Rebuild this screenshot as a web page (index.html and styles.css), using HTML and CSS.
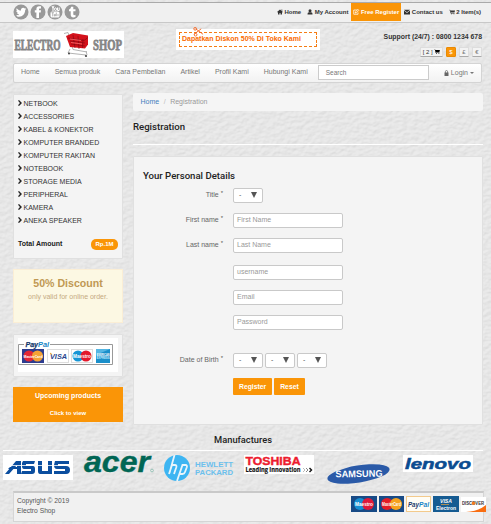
FILE: index.html
```html
<!DOCTYPE html>
<html lang="id">
<head>
<meta charset="utf-8">
<title>Electro Shop</title>
<link rel="stylesheet" href="styles.css">
</head>
<body>
<svg class="paper" width="491" height="524" aria-hidden="true">
  <filter id="grain" x="0" y="0" width="100%" height="100%" color-interpolation-filters="sRGB">
    <feTurbulence type="fractalNoise" baseFrequency="0.18 0.28" numOctaves="3" seed="5" result="n"/>
    <feDiffuseLighting in="n" lighting-color="#fff" surfaceScale="0.8" diffuseConstant="1.07"><feDistantLight azimuth="235" elevation="58"/></feDiffuseLighting>
  </filter>
  <rect width="491" height="524" filter="url(#grain)" opacity=".2"/>
</svg>
<svg class="defs" width="0" height="0" aria-hidden="true">
  <symbol id="cart" viewBox="0 0 14 12"><path d="M0 1h2.600l.4 1.300H14l-1.200 5H4.600l.2 1H13v1H3.900L2 2H0zM5 10h2v2H5zM10.500 10h2v2h-2z"/></symbol>
</svg>
<header class="topbar">
  <div class="social">
    <svg viewBox="0 0 16 16"><circle cx="8" cy="8" r="7.500" fill="#999"/><path d="M3 11.500c2 0 2.800-.4 3.300-.9-1.300 0-2-.8-2.200-1.500h.9C3.800 8.600 3.300 7.700 3.300 6.800l.9.200C3.200 6.100 3.200 5 3.700 4.200 5 5.700 6.400 6.500 8 6.600 7.700 4.500 9.100 3.600 10.200 3.700c.7 0 1.200.4 1.500.8l1.300-.5-.8 1.200 1-.2-1 1.100C12.200 9.800 9.700 12.800 6 12.800c-1.200 0-2.200-.4-3-1.300z" fill="#fff"/></svg>
    <svg viewBox="0 0 16 16"><circle cx="8" cy="8" r="7.500" fill="#999"/><path d="M6.400 14V8.600H4.800V6.300h1.600V4.900C6.400 3.100 7.500 2.200 9 2.200h2v2.300H9.900c-.7 0-.9.300-.9.900v.9h2l-.3 2.300H9V14z" fill="#fff"/></svg>
    <svg viewBox="0 0 16 16"><circle cx="8" cy="8" r="7.500" fill="#999"/><path d="M5 1.800l1 2.700V7M7 1.800L6 4.500M10.500 3.500v3h1.700v-3" fill="none" stroke="#fff"/><ellipse cx="8.500" cy="5.200" rx="1" ry="1.400" fill="none" stroke="#fff"/><rect x="3.500" y="7.500" width="9" height="6" rx="1.500" fill="#fff"/><path d="M4.500 8.700h2.400M5.700 8.700v3.700M7.300 10v2h1v-2M9.300 8.500v3.700M11 10v2.200" stroke="#999" stroke-width=".7" fill="none"/></svg>
    <svg viewBox="0 0 16 16"><circle cx="8" cy="8" r="7.500" fill="#999"/><path d="M7 2.700h2.300v2.500h2.200v2H9.300v2.900c0 1.300.8 1.400 2.200.7v2.200c-2.500 1-4.800.3-4.800-2.300V7.200H5V5.400c1.400-.4 1.900-1.200 2-2.700z" fill="#fff"/></svg>
  </div>
  <nav class="account">
    <a><svg viewBox="0 0 12 12"><path d="M0 6l6-5 6 5-1 1-1-.8V11H7V8H5v3H2V6.200L1 7zM9 1h1.500v3L9 2.700z"/></svg>Home</a>
    <a><svg viewBox="0 0 12 12"><circle cx="6" cy="3.500" r="3"/><path d="M1 11c0-3 1-4.500 3-4.500h4c2 0 3 1.500 3 4.500z"/></svg>My Account</a>
    <a class="active"><svg viewBox="0 0 12 12"><path d="M8 2H1.500v8.500H10V7M4.500 8l.5-2.500L10 .7 11.700 2.500 7 7.500z" fill="none" stroke="#fff" stroke-width="1.500"/></svg><span>Free Register</span></a>
    <a><svg viewBox="0 0 12 12"><path d="M0 1.500h12L6 6.500zM0 3l6 5 6-5v8H0z"/></svg>Contact us</a>
    <a><svg viewBox="0 0 14 12"><use href="#cart"/></svg>2 Item(s)</a>
  </nav>
</header>

<div class="container">
  <div class="brand-row">
    <svg class="logo" viewBox="0 0 111 27"><rect width="111" height="27" fill="#fff"/>
      <g font-family="Liberation Serif" font-weight="bold" font-size="15.500" fill="#858585" stroke="#858585" stroke-width=".8"><text x="1.500" y="18.500" textLength="46" lengthAdjust="spacingAndGlyphs">ELECTRO</text><text x="80" y="18.500" textLength="29" lengthAdjust="spacingAndGlyphs">SHOP</text></g>
      <path d="M51 2.500l4-1 5 17 14 2.500M57 18l-2 4 18 2M73 20l1 4" stroke="#aaa" fill="none" stroke-width=".9"/><path d="M53 5l7-3 15 2.500v9l-3 4-15-1.500z" fill="#d4111b"/><path d="M55 7l16 2.500 4-3M57 10l15 2M58 13l14 2M60 4l2 13M65 5l1 13M70 8l-.5 9" stroke="#7f0710" stroke-width=".6" fill="none"/><path d="M57 8l11 1.500M58 11.500l11 1.500" stroke="#ff7a7a" stroke-width=".7"/><circle cx="56" cy="22.500" r="1" fill="#444"/><circle cx="73" cy="25" r="1.100" fill="#444"/>
    </svg>
    <div class="coupon"><svg class="scissors" viewBox="0 0 12 11"><path d="M1 8l8-6M3 2l8 6" stroke="#f26522" stroke-width="1"/><circle cx="2.300" cy="2" r="1.500" fill="none" stroke="#f26522"/><circle cx="2.800" cy="8.500" r="1.500" fill="none" stroke="#f26522"/></svg><p>Dapatkan Diskon 50% Di Toko Kami</p></div>
    <div class="support"><p>Support (24/7) : 0800 1234 678</p>
      <div class="currency"><span class="basket">[ 2 ] <svg viewBox="0 0 14 12"><use href="#cart"/></svg></span><span class="on">$</span><span>£</span><span>€</span></div>
    </div>
  </div>

  <nav class="navbar">
    <a>Home</a><a>Semua produk</a><a>Cara Pembelian</a><a>Artikel</a><a>Profil Kami</a><a>Hubungi Kami</a>
    <div class="search">Search</div>
    <div class="login"><svg viewBox="0 0 10 12"><path d="M1 5h8v7H1z"/><path d="M2.800 6V3.300a2.200 2.200 0 0 1 4.400 0V6" fill="none" stroke="#666" stroke-width="1.500"/></svg>Login <i></i></div>
  </nav>

  <div class="columns">
    <aside>
      <div class="box categories">
        <ul>
          <li>NETBOOK</li><li>ACCESSORIES</li><li>KABEL &amp; KONEKTOR</li><li>KOMPUTER BRANDED</li><li>KOMPUTER RAKITAN</li><li>NOTEBOOK</li><li>STORAGE MEDIA</li><li>PERIPHERAL</li><li>KAMERA</li><li>ANEKA SPEAKER</li>
        </ul>
        <div class="total"><b>Total Amount</b><span>Rp.1M</span></div>
      </div>
      <div class="discount"><h2>50% Discount</h2><p>only valid for online order.</p></div>
      <div class="box paypal">
        <svg viewBox="0 0 100 34"><rect width="100" height="34" fill="#fff"/><path d="M6 6.500H.5v20h94v-20H32" fill="none" stroke="#999"/>
          <g font-family="Liberation Sans" font-weight="bold" font-style="italic"><text x="7.500" y="8.500" font-size="7" textLength="12.500" lengthAdjust="spacingAndGlyphs" fill="#173a6b" stroke="#173a6b" stroke-width=".25">Pay</text><text x="20" y="8.500" font-size="7" textLength="11" lengthAdjust="spacingAndGlyphs" fill="#1584c4">Pal</text></g>
          <rect x="4" y="11" width="22" height="14" fill="#2c3c8f"/><circle cx="11" cy="18" r="5.500" fill="#e32636"/><circle cx="19.500" cy="18" r="5.500" fill="#f5a335"/><text x="5.500" y="19.500" font-family="Liberation Sans" font-weight="bold" font-size="4" textLength="19" lengthAdjust="spacingAndGlyphs" fill="#fff">MasterCard</text>
          <rect x="29.500" y="11.500" width="21" height="13" fill="#fff" stroke="#ddd"/><text x="32" y="21" font-family="Liberation Sans" font-weight="bold" font-style="italic" font-size="8" textLength="17" lengthAdjust="spacingAndGlyphs" fill="#28458e">VISA</text><path d="M32 15l2 1.500" stroke="#e69d20"/>
          <rect x="53.500" y="11.500" width="21" height="13" fill="#fff" stroke="#ddd"/><circle cx="60" cy="18" r="5.500" fill="#1595d5"/><circle cx="68" cy="18" r="5.500" fill="#e3192c"/><text x="55" y="19.500" font-family="Liberation Sans" font-weight="bold" font-size="4.500" textLength="18" lengthAdjust="spacingAndGlyphs" fill="#fff">Maestro</text>
          <rect x="78" y="11" width="14" height="14" fill="#1a8fca"/><path d="M78 11h14l-14 6z" fill="#54b6e3"/><text x="78.500" y="17.500" font-family="Liberation Sans" font-weight="bold" font-size="3.500" textLength="13" lengthAdjust="spacingAndGlyphs" fill="#fff">AMERICAN</text><text x="78.500" y="21" font-family="Liberation Sans" font-weight="bold" font-size="3.500" textLength="13" lengthAdjust="spacingAndGlyphs" fill="#cfeeff">EXPRESS</text></svg>
      </div>
      <div class="upcoming"><b>Upcoming products</b><small>Click to view</small></div>
    </aside>
    <main>
      <div class="breadcrumb"><a>Home</a><i>/</i><span>Registration</span></div>
      <h1>Registration</h1>
      <form class="box">
        <h3>Your Personal Details</h3>
        <div class="row"><label>Title <sup>*</sup></label><span class="select">-</span></div>
        <div class="row"><label>First name <sup>*</sup></label><span class="input">First Name</span></div>
        <div class="row last"><label>Last name <sup>*</sup></label><span class="input">Last Name</span></div>
        <div class="row"><label></label><span class="input">username</span></div>
        <div class="row"><label></label><span class="input">Email</span></div>
        <div class="row password"><label></label><span class="input">Password</span></div>
        <div class="row"><label>Date of Birth <sup>*</sup></label><span class="select">-</span><span class="select">-</span><span class="select">-</span></div>
        <div class="actions"><span class="btn">Register</span><span class="btn">Reset</span></div>
      </form>
    </main>
  </div>
</div>

<section class="makers">
  <h4>Manufactures</h4>
  <div class="logos">
    <svg width="70" height="25" viewBox="0 0 70 25"><rect width="70" height="25" fill="#fff"/><g fill="#0b4e9f"><path d="M2 19L13 6h5v13h-4V10L6 19zM7 12h7v2H5zM20 6h12l-1 3h-8v2h7q2 0 2 3v2q0 3-3 3H18l1-3h9v-2h-7q-2 0-2-3V8zM35 6h4v10h6V6h4v13H37q-2 0-2-3zM52 6h14v3H55v2h8q4 0 4 4t-4 4H51v-3h11v-2h-8q-3 0-3-4z"/></g><path d="M1 10.500h68" stroke="#fff" stroke-width=".8"/></svg>
    <svg width="71" height="19" viewBox="0 0 71 19"><text x="1" y="16.500" font-family="Liberation Sans" font-weight="bold" font-style="italic" font-size="30" textLength="66" lengthAdjust="spacingAndGlyphs" fill="#006654" stroke="#006654" stroke-width=".4">acer</text><circle cx="69" cy="15.500" r="1.400" fill="none" stroke="#7bb3a5" stroke-width=".7"/></svg>
    <svg width="71" height="27" viewBox="0 0 71 27"><circle cx="14" cy="13" r="13" fill="#3db5f2"/><path d="M11.500 0L6.500 18M6 19l3-9h3q2 0 1.300 2.300L11 19M14 26l5.500-16h3q2 0 1.300 2.300L22 17q-.7 2-2.500 2H16" fill="none" stroke="#e9f5fb" stroke-width="1.800"/><g font-family="Liberation Sans" font-size="7" font-weight="bold" fill="#6bc0ed"><text x="32" y="11.500" textLength="38" lengthAdjust="spacingAndGlyphs">HEWLETT</text><text x="32" y="19.500" textLength="38" lengthAdjust="spacingAndGlyphs">PACKARD</text></g></svg>
    <svg width="70" height="19" viewBox="0 0 70 19"><rect width="70" height="19" fill="#fff"/><text x="1.500" y="9.500" font-family="Liberation Sans" font-weight="bold" font-size="11.500" textLength="55" lengthAdjust="spacingAndGlyphs" fill="#ed1c2e" stroke="#ed1c2e" stroke-width=".4">TOSHIBA</text><text x="1.500" y="17" font-family="Open Sans" font-weight="bold" font-size="6.300" textLength="55" lengthAdjust="spacingAndGlyphs" fill="#111" stroke="#111" stroke-width=".15">Leading Innovation</text><path d="M59 13l2 2-2 2" fill="none" stroke="#bbb"/><path d="M62 13l2 2-2 2" fill="none" stroke="#888"/><path d="M65.500 13l2 2-2 2" fill="none" stroke="#111" stroke-width="1.400"/></svg>
    <svg class="samsung" width="63" height="22" viewBox="0 0 63 22"><ellipse cx="31.500" cy="11" rx="31.500" ry="8.500" transform="rotate(-9 31.500 11)" fill="#2a5aa8"/><text x="8.500" y="14" font-family="Liberation Sans" font-weight="bold" font-size="9.500" textLength="47" lengthAdjust="spacingAndGlyphs" fill="#fff" transform="rotate(-1 30 12)">SAMSUNG</text></svg>
    <svg width="70" height="17" viewBox="0 0 70 17"><rect width="70" height="17" fill="#fff"/><text x="2" y="13.500" font-family="Liberation Sans" font-weight="bold" font-style="italic" font-size="14.500" textLength="66" lengthAdjust="spacingAndGlyphs" fill="#0b4c91" stroke="#0b4c91" stroke-width=".5">lenovo</text></svg>
  </div>
</section>

<footer>
  <p>Copyright © 2019<br>Electro Shop</p>
  <svg width="136" height="17" viewBox="0 0 136 17" font-family="Liberation Sans" font-weight="bold">
    <rect width="26" height="16" fill="#174a86"/><circle cx="9" cy="8" r="6" fill="#168fd3"/><circle cx="17" cy="8" r="6" fill="#df1939"/><text x="4" y="9.800" font-size="4.500" textLength="18" lengthAdjust="spacingAndGlyphs" fill="#fff">Maestro</text>
    <rect x="28" width="25" height="16" fill="#174a86"/><circle cx="36" cy="8" r="6" fill="#e31c26"/><circle cx="45" cy="8" r="6" fill="#f6a21d"/><text x="31" y="9.800" font-size="4.500" textLength="19" lengthAdjust="spacingAndGlyphs" fill="#fff">MasterCard</text>
    <rect x="55.500" y=".5" width="24" height="15" fill="#fffdf5" stroke="#f3ca8c"/><text x="57" y="10.500" font-style="italic" font-size="7" textLength="11" lengthAdjust="spacingAndGlyphs" fill="#173a6b">Pay</text><text x="68" y="10.500" font-style="italic" font-size="7" textLength="10" lengthAdjust="spacingAndGlyphs" fill="#1785c8">Pal</text>
    <rect x="82" width="26" height="16" fill="#155b92"/><text x="89" y="6.500" font-size="5.500" font-style="italic" textLength="12" lengthAdjust="spacingAndGlyphs" fill="#fff">VISA</text><path d="M90 8.500h8" stroke="#e8a33d" stroke-width=".7"/><text x="85" y="13.500" font-size="5" textLength="20" lengthAdjust="spacingAndGlyphs" fill="#fff">Electron</text>
    <rect x="110" y="1" width="25" height="15" fill="#fff"/><text x="111" y="9" font-size="4.500" textLength="22" lengthAdjust="spacingAndGlyphs" fill="#333">DISCOVER</text><circle cx="122.500" cy="7.300" r="1.700" fill="#f47b20"/><path d="M135 9v7h-20q13-1 20-7z" fill="#f96d10"/>
  </svg>
</footer>
</body>
</html>
```
FILE: styles.css
```css
* { box-sizing: border-box; }
body { margin: 0; width: 491px; height: 524px; overflow: hidden; background: #e7e7e7; color: #333; font: 7px/10px "Liberation Sans", Arial, sans-serif; }
h1, h2, h3, h4, p, ul { margin: 0; padding: 0; }
svg { overflow: visible; }
.paper { position: absolute; inset: 0; z-index: -1; }
.defs { position: absolute; }
.topbar { display: flex; justify-content: space-between; height: 21px; margin: 2px 0 1px; padding: 0 10px 0 12.5px; background: #f0f0f0; border-top: 1px solid #aaa; border-bottom: 1px solid #c8c8c8; }
.social { display: flex; gap: 1px; padding-top: 1px; }
.social svg { width: 16px; height: 16px; }
.account { display: flex; height: 18px; font: bold 6px/18px "Liberation Sans", sans-serif; color: #333; }
.account a { padding: 0 3px; display: flex; align-items: center; gap: 1.500px; white-space: nowrap; }
.account a:last-child { padding-right: 0; }
.account svg { width: 6px; height: 6px; fill: #333; }
.account .active { background: #fa9507; color: #fff; padding: 0 2px; }
.container { padding: 0 8px 0 13px; }
.brand-row { display: flex; height: 38px; }
.logo { width: 111px; height: 27px; margin-top: 7px; }
.coupon { position: relative; width: 144px; height: 21px; margin: 5px 0 0 52px; padding: 3px; background: #fff; }
.coupon p { height: 15px; width: 138px; border: 1px dashed #f57c14; color: #fa6a00; font: bold 7px/11px "Liberation Sans", sans-serif; padding-left: 2px; white-space: nowrap; }
.scissors { position: absolute; left: 17px; top: -2px; width: 11px; height: 10px; }
.support { margin-left: auto; padding: 7px 1px 0 0; text-align: right; font: bold 6.900px/11px "Liberation Sans", sans-serif; color: #333; white-space: nowrap; }
.currency { display: flex; justify-content: flex-end; gap: 3px; margin-top: 5px; font: 6px/10px "Liberation Sans", sans-serif; }
.currency span { height: 10px; width: 10px; text-align: center; background: #f3f3f3; border: 1px solid #ddd; border-bottom-color: #aaa; border-radius: 1px; line-height: 8px; color: #777; }
.currency .basket { width: 23px; color: #333; }
.currency svg { width: 6px; height: 5px; }
.currency .on { background: #fa9507; border-color: #e98a05; color: #fff; }
.navbar { display: flex; align-items: center; height: 20px; gap: 15px; width: 469px; margin-top: .5px; padding: 0 7px; background: linear-gradient(#fff, #f2f2f2); border: 1px solid #d4d4d4; border-radius: 2px; color: #777; white-space: nowrap; }
.navbar a { padding-bottom: 1px; }
.search { width: 115px; height: 15px; margin-left: -5px; border: 1px solid #ccc; background: #fff; padding-left: 7px; font-size: 6.500px; line-height: 13px; }
.login { margin-left: auto; display: flex; align-items: center; gap: 2px; }
.login svg { width: 5px; height: 6px; fill: #666; }
.login i { border: 2px solid transparent; border-top-color: #777; border-bottom: 0; }
.columns { display: grid; grid-template-columns: 110px 350px; gap: 10px; margin-top: 10.500px; }
.box { background: #f4f4f4; border: 1px solid #e0e0e0; border-radius: 1px; }
.categories { height: 165px; margin-top: .5px; padding: 2px 4px; }
ul { list-style: none; }
li { line-height: 13px; display: flex; align-items: center; white-space: nowrap; }
li::before { content: ""; width: 4px; height: 6px; background: #222; clip-path: polygon(0 12%, 25% 0, 100% 50%, 25% 100%, 0 88%, 48% 50%); margin-right: 1.500px; }
.total { display: flex; justify-content: space-between; align-items: center; margin-top: 12px; color: #222; font-size: 7px; }
.total span { width: 27px; height: 11px; border-radius: 5px; background: #fa9507; color: #fff; font: bold 6px/11px "Liberation Sans", sans-serif; text-align: center; }
.discount { height: 54px; margin-top: 10.500px; padding-top: 6px; text-align: center; color: #c5aa81; background: #fcf8e3; border: 1px solid #fbeed5; }
h2 { font: bold 10.600px/15px "Liberation Sans", sans-serif; color: #c09853; }
.discount p { margin-top: 1px; }
.paypal { height: 43px; margin-top: 11px; padding: 3px 4px; }
.paypal svg { display: block; width: 100px; height: 34px; }
.upcoming { height: 35px; margin-top: 10px; padding-top: 4px; background: #fa9507; color: #fff; text-align: center; font: bold 7px/10px "Liberation Sans", sans-serif; }
.upcoming b, .upcoming small { display: block; }
.upcoming small { font-size: 6px; margin-top: 7px; }
.breadcrumb { height: 18px; padding-left: 7.500px; line-height: 17px; background: #f5f5f5; border-radius: 2px; color: #999; }
.breadcrumb a { color: #4480bd; }
.breadcrumb i { font-style: normal; margin: 0 4.500px; color: #bbb; }
h1, h3, h4 { font: 500 9.600px/14px Roboto, sans-serif; color: #222; }
h1 { height: 33.500px; padding-top: 9px; border-bottom: 1px solid #fff; }
form { height: 269px; margin-top: 11px; padding: 12px 0 0 9px; }
h3 { margin-bottom: 5px; }
.row { display: flex; height: 15px; margin-bottom: 10px; gap: 2px; }
.row label { width: 80px; margin-right: 8px; text-align: right; line-height: 13px; color: #666; }
sup { font-size: 6px; line-height: 0; color: #555; vertical-align: 2px; }
.row.last { margin-bottom: 12px; }
.row.password { margin-bottom: 23px; }
.input, .select { border: 1px solid #c9c9c9; border-radius: 2px; background: #fff; color: #999; width: 110px; padding-left: 3px; line-height: 12px; }
.select { width: 30px; display: flex; justify-content: space-between; padding: 0 5px 0 5px; color: #555; }
.select::after { content: ""; border: 3.500px solid transparent; border-top: 6px solid #555; border-bottom: 0; height: 0; margin-top: 3px; }
.actions { display: flex; gap: 2px; padding-left: 90px; }
.btn { height: 17px; padding: 0 6px; background: #fa9507; color: #fff; border-radius: 1px; font: bold 6.800px/17px "Liberation Sans", sans-serif; }
.makers { padding: 8px 0 0 3px; }
.makers h4 { width: 480px; height: 18px; text-align: center; border-bottom: 1px solid #fff; font-size: 9.300px; }
.logos { display: flex; align-items: flex-start; gap: 9.700px; height: 36px; padding-top: 4px; }
.samsung { margin: 8px 4px 0 3px; }
footer { display: flex; justify-content: space-between; width: 471px; height: 31px; margin: 4px 0 0 12.500px; padding: 3px 0 0 3.500px; border: 1px solid #d5d5d5; border-top: 2px solid #c9c9c9; background: #f1f1f1; color: #555; font-size: 6.700px; }
footer svg { flex: none; margin-right: -4px; }
```
